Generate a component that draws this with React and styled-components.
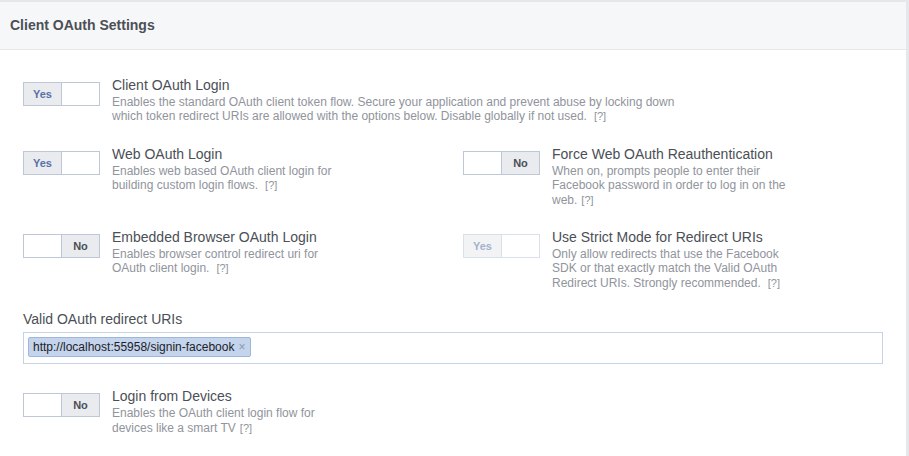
import React from "react";
import styled, { createGlobalStyle, css } from "styled-components";

const Global = createGlobalStyle`
  html, body { margin: 0; padding: 0; background: #e9ebee; }
  body { font-family: "Liberation Sans", Arial, Helvetica, sans-serif; }
  * { box-sizing: border-box; }
`;

const Page = styled.div`
  padding: 2px 3px 0 0;
  min-height: 100vh;
  background: #e5e7ea;
`;

const Panel = styled.section`
  background: #fff;
  min-height: 454px;
`;

const Header = styled.header`
  height: 48px;
  background: #f6f7f9;
  border-bottom: 1px solid #e5e7ea;
  padding-left: 10px;
  font-size: 14px;
  font-weight: bold;
  line-height: 47px;
  color: #4b4f56;
`;

const Body = styled.div`
  padding: 25px 23px 20px 23px;
`;

const Grid = styled.div`
  display: grid;
  grid-template-columns: 440px 440px;
  row-gap: 20px;
`;

const Setting = styled.div`
  display: flex;
  align-items: flex-start;
  gap: 12px;
  ${(p) => p.$wide && css`grid-column: 1 / span 2;`}
  ${(p) => p.$top && css`margin-top: ${p.$top}px;`}
`;

const Toggle = styled.div`
  flex: none;
  margin-top: 7px;
  width: 77px;
  height: 24px;
  border: 1px solid #bdc7d8;
  display: flex;
  ${(p) => p.$disabled && css`opacity: 0.55;`}
`;

const Half = styled.div`
  flex: 1;
  display: flex;
  align-items: center;
  justify-content: center;
  font-size: 11px;
  font-weight: bold;
  background: ${(p) => (p.$active ? "#e9ebee" : "#fff")};
  color: ${(p) => (p.$yes ? "#5872a8" : "#4b4f56")};
  & + & { border-left: 1px solid #bdc7d8; }
`;

const Text = styled.div`
  width: ${(p) => (p.$wide ? 580 : 240)}px;
`;

const Title = styled.div`
  font-size: 14px;
  line-height: 20px;
  color: #4b4f56;
`;

const Desc = styled.p`
  margin: 0;
  font-size: 12px;
  line-height: 14.4px;
  color: #90949c;
`;

const Help = styled.a`
  display: inline-block;
  margin-left: ${(p) => p.$gap || 3}px;
  font-size: 11px;
  line-height: 13px;
  color: #90949c;
  white-space: nowrap;
`;

const FieldLabel = styled.div`
  margin-top: 19px;
  font-size: 14px;
  line-height: 20px;
  color: #4b4f56;
  margin-bottom: 3px;
`;

const Input = styled.div`
  width: 860px;
  height: 32px;
  border: 1px solid #c5d3e6;
  padding: 4px;
  display: flex;
  align-items: flex-start;
`;

const Token = styled.span`
  height: 20px;
  padding: 0 5px 0 4px;
  border: 1px solid #9fb6da;
  border-radius: 2px;
  background: #c3d4ec;
  font-size: 12px;
  line-height: 18px;
  color: #1d2129;
  display: inline-flex;
  align-items: center;
  gap: 4px;
`;

const Remove = styled.span`
  color: #8d99ad;
  font-size: 12px;
`;

function Switch({ on, disabled }) {
  return (
    <Toggle $disabled={disabled}>
      {on ? (
        <>
          <Half $active $yes>Yes</Half>
          <Half />
        </>
      ) : (
        <>
          <Half />
          <Half $active>No</Half>
        </>
      )}
    </Toggle>
  );
}

function Row({ on, disabled, title, desc, gap, wide, top }) {
  return (
    <Setting $wide={wide} $top={top}>
      <Switch on={on} disabled={disabled} />
      <Text $wide={wide}>
        <Title>{title}</Title>
        <Desc>
          {desc}
          <Help $gap={gap}>[?]</Help>
        </Desc>
      </Text>
    </Setting>
  );
}

export default function App() {
  return (
    <>
      <Global />
      <Page>
        <Panel>
          <Header>Client OAuth Settings</Header>
          <Body>
            <Grid>
              <Row
                wide
                on
                title="Client OAuth Login"
                desc="Enables the standard OAuth client token flow. Secure your application and prevent abuse by locking down which token redirect URIs are allowed with the options below. Disable globally if not used."
                gap={7}
              />
              <Row
                on
                title="Web OAuth Login"
                desc="Enables web based OAuth client login for building custom login flows."
                gap={7}
              />
              <Row
                title="Force Web OAuth Reauthentication"
                desc="When on, prompts people to enter their Facebook password in order to log in on the web."
                gap={4}
              />
              <Row
                title="Embedded Browser OAuth Login"
                desc="Enables browser control redirect uri for OAuth client login."
                gap={7}
              />
              <Row
                on
                disabled
                title="Use Strict Mode for Redirect URIs"
                desc="Only allow redirects that use the Facebook SDK or that exactly match the Valid OAuth Redirect URIs. Strongly recommended."
                gap={7}
              />
            </Grid>
            <FieldLabel>Valid OAuth redirect URIs</FieldLabel>
            <Input>
              <Token>
                http://localhost:55958/signin-facebook
                <Remove>×</Remove>
              </Token>
            </Input>
            <Setting $top={22}>
              <Switch />
              <Text>
                <Title>Login from Devices</Title>
                <Desc>
                  Enables the OAuth client login flow for devices like a smart TV
                  <Help $gap={4}>[?]</Help>
                </Desc>
              </Text>
            </Setting>
          </Body>
        </Panel>
      </Page>
    </>
  );
}
